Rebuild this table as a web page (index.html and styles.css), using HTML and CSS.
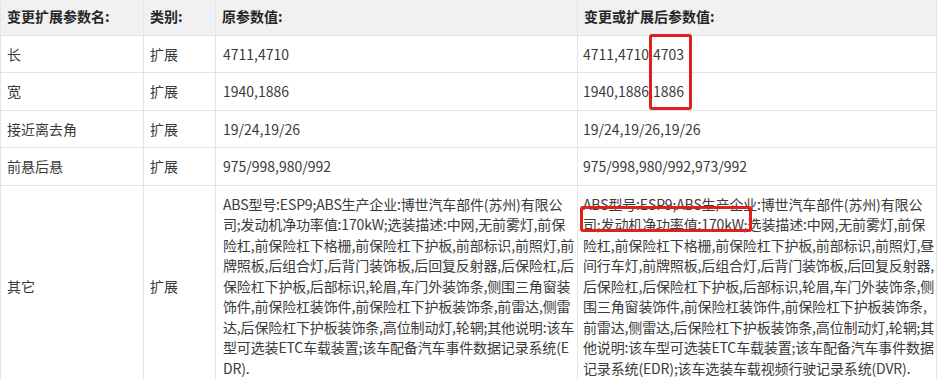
FILE: index.html
```html
<!DOCTYPE html>
<html lang="zh-CN">
<head>
<meta charset="utf-8">
<title>变更扩展参数</title>
<link rel="stylesheet" href="styles.css">
</head>
<body>
<div class="wrap">
  <table class="params">
    <colgroup>
      <col class="c1"><col class="c2"><col class="c3"><col class="c4">
    </colgroup>
    <thead>
      <tr><th>变更扩展参数名:</th><th>类别:</th><th>原参数值:</th><th>变更或扩展后参数值:</th></tr>
    </thead>
    <tbody>
      <tr><td>长</td><td>扩展</td><td>4711,4710</td><td>4711,4710,4703</td></tr>
      <tr><td>宽</td><td>扩展</td><td>1940,1886</td><td>1940,1886,1886</td></tr>
      <tr><td>接近离去角</td><td>扩展</td><td>19/24,19/26</td><td>19/24,19/26,19/26</td></tr>
      <tr><td>前悬后悬</td><td>扩展</td><td>975/998,980/992</td><td>975/998,980/992,973/992</td></tr>
      <tr class="other">
        <td>其它</td><td>扩展</td>
        <td class="long">ABS型号:ESP9;ABS生产企业:博世汽车部件(苏州)有限公<br>司;发动机净功率值:170kW;选装描述:中网,无前雾灯,前保<br>险杠,前保险杠下格栅,前保险杠下护板,前部标识,前照灯,前<br>牌照板,后组合灯,后背门装饰板,后回复反射器,后保险杠,后<br>保险杠下护板,后部标识,轮眉,车门外装饰条,侧围三角窗装<br>饰件,前保险杠装饰件,前保险杠下护板装饰条,前雷达,侧雷<br>达,后保险杠下护板装饰条,高位制动灯,轮辋;其他说明:该车<br>型可选装ETC车载装置;该车配备汽车事件数据记录系统(E<br>DR).</td>
        <td class="long">ABS型号:ESP9;ABS生产企业:博世汽车部件(苏州)有限公<br>司;发动机净功率值:170kW;选装描述:中网,无前雾灯,前保<br>险杠,前保险杠下格栅,前保险杠下护板,前部标识,前照灯,昼<br>间行车灯,前牌照板,后组合灯,后背门装饰板,后回复反射器,<br>后保险杠,后保险杠下护板,后部标识,轮眉,车门外装饰条,侧<br>围三角窗装饰件,前保险杠装饰件,前保险杠下护板装饰条,<br>前雷达,侧雷达,后保险杠下护板装饰条,高位制动灯,轮辋;其<br>他说明:该车型可选装ETC车载装置;该车配备汽车事件数据<br>记录系统(EDR);该车选装车载视频行驶记录系统(DVR).</td>
      </tr>
    </tbody>
  </table>
  <div class="mark mark-dims"></div>
  <div class="mark mark-power"></div>
</div>
</body>
</html>
```

FILE: styles.css
```css
html, body {
  margin: 0;
  padding: 0;
  background: #ffffff;
}

.wrap {
  position: relative;
  width: 938px;
}

.params {
  border-collapse: collapse;
  table-layout: fixed;
  width: 936px;
  font-family: "Noto Sans CJK SC", "Noto Sans", sans-serif;
  font-size: 14px;
  line-height: 20.5px;
  color: #3a3a3a;
}

.c1 { width: 143px; }
.c2 { width: 72px; }
.c3 { width: 362px; }
.c4 { width: 359px; }

.params th,
.params td {
  border: 1px solid #e4e4e6;
  padding: 8px 6px;
  text-align: left;
  vertical-align: middle;
  white-space: nowrap;
  overflow: hidden;
}

.params th {
  background: #f1f1f1;
  color: #262626;
  font-weight: 700;
  padding-top: 6px;
  padding-bottom: 8px;
  border-top: none;
}

.params td:nth-child(3) {
  padding-left: 7px;
}

.params td:nth-child(4) {
  padding-left: 5px;
}

.params td.long {
  letter-spacing: -0.15px;
}

.mark {
  position: absolute;
  border: 3px solid #e0201c;
  border-radius: 3px;
  box-sizing: border-box;
}

.mark-dims {
  left: 649px;
  top: 34px;
  width: 43px;
  height: 76px;
}

.mark-power {
  left: 580px;
  top: 206px;
  width: 172px;
  height: 26px;
}
```
